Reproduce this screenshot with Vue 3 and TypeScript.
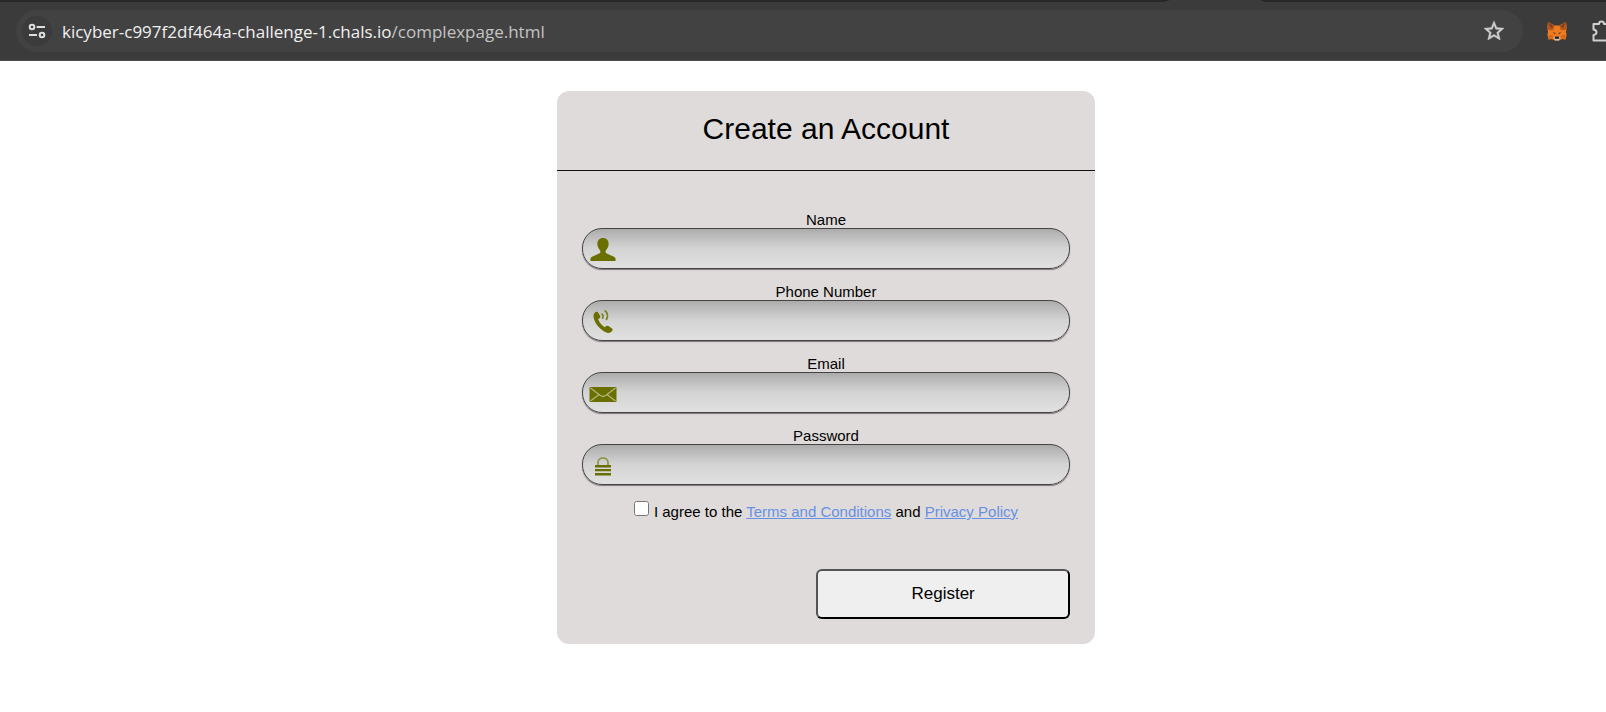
<script setup lang="ts">
import { reactive, ref } from 'vue'

type FieldKey = 'name' | 'phone' | 'email' | 'password'

interface Field {
  key: FieldKey
  label: string
  type: string
}

const fields: Field[] = [
  { key: 'name', label: 'Name', type: 'text' },
  { key: 'phone', label: 'Phone Number', type: 'tel' },
  { key: 'email', label: 'Email', type: 'email' },
  { key: 'password', label: 'Password', type: 'password' },
]

const values = reactive<Record<FieldKey, string>>({ name: '', phone: '', email: '', password: '' })
const agreed = ref(false)
</script>

<template>
  <div class="window">
    <header class="chrome">
      <div class="tabstrip"><div class="tab"></div></div>
      <div class="toolbar">
        <div class="omnibox">
          <button class="site-info" type="button" aria-label="View site information">
            <svg width="18" height="18" viewBox="0 0 18 18" fill="none" stroke="#dedede" stroke-width="2">
              <circle cx="4" cy="5" r="2.3" />
              <path d="M8.6 5H17M1 13h8" />
              <circle cx="14" cy="13" r="2.3" />
            </svg>
          </button>
          <div class="url"><span class="host">kicyber-c997f2df464a-challenge-1.chals.io</span>/complexpage.html</div>
          <button class="icon-button" type="button" aria-label="Bookmark this tab">
            <svg width="24" height="24" viewBox="0 0 24 24" fill="#cfcfcf" stroke="#cfcfcf" stroke-width=".5">
              <path d="M22 9.24l-7.19-.62L12 2 9.19 8.63 2 9.24l5.46 4.73L5.82 21 12 17.27 18.18 21l-1.63-7.03L22 9.24zM12 15.4l-3.76 2.27 1-4.28-3.32-2.88 4.38-.38L12 6.1l1.71 4.04 4.38.38-3.32 2.88 1 4.28L12 15.4z" />
            </svg>
          </button>
        </div>
        <div class="extensions">
          <button class="icon-button" type="button" aria-label="MetaMask">
            <svg width="20" height="20" viewBox="0 0 20 20">
              <path d="M1 1l6.500 3.500h5L19 1l.6 6-.6 4 .6 3-1.200 4.400-3.400-.4L12 19.500H8L5 18l-3.400.4L.4 14l.6-3-.6-4z" fill="#ee7c1d" />
              <path d="M1 1l6.500 3.500-1.200 4.700L1.600 9 .4 6zM19 1l-6.500 3.500 1.200 4.700L18.400 9l1.200-3z" fill="#b5561f" />
              <path d="M1 1l5.300 4.300L4 7zM19 1l-5.300 4.300L16 7z" fill="#823d1c" />
              <path d="M1.400 14h4.400l.4 3-4.600 1.400zM18.600 14h-4.400l-.4 3 4.600 1.400z" fill="#d9691a" />
              <path d="M5.500 11l3 1-.4 1.500zM14.500 11l-3 1 .4 1.500z" fill="#5b3a28" />
              <path d="M6.500 16.400l1.500-1h4l1.500 1-1.500 3H8z" fill="#cfbfb2" />
              <path d="M8.200 15.400h3.600l.5 1.800-.6.6H8.300l-.6-.6z" fill="#191919" />
            </svg>
          </button>
          <button class="icon-button" type="button" aria-label="Extensions">
            <svg width="24" height="24" viewBox="0 0 24 24" fill="none" stroke="#cfcfcf" stroke-width="2" stroke-linejoin="round">
              <path d="M2.500 5H8c0-3.300 5-3.300 5 0h6v6c4 0 4 5 0 5v5.500H2.500V16c4-.7 4-4.800 0-5.500z" />
            </svg>
          </button>
        </div>
      </div>
    </header>

    <main>
      <form class="card" @submit.prevent>
        <h1>Create an Account</h1>
        <div class="body">
          <div v-for="field in fields" :key="field.key" class="field">
            <label :for="field.key">{{ field.label }}</label>
            <div class="control">
              <input :id="field.key" v-model="values[field.key]" :type="field.type" />
              <svg class="glyph" width="30" height="26" viewBox="0 0 30 26" fill="#697000" aria-hidden="true">
                <path v-if="field.key === 'name'" d="M15 1c-3.500 0-5.800 2.500-5.600 6.300.1 2.700 1.300 4.900 2.900 6.100v2.400c-1.500 1.500-7.300 3-9.300 4.600-.7.7-.7 2.200-.5 3.600h25c.2-1.400.2-2.900-.5-3.600-2-1.600-7.800-3.100-9.300-4.600v-2.400c1.600-1.200 2.800-3.400 2.900-6.100C20.800 3.500 18.500 1 15 1z" />
                <g v-else-if="field.key === 'phone'">
                  <path d="M6.500 4c1-1.200 2.600-1.600 3.400-.7l2.300 3.600c.5.900.1 1.700-.7 2.300l-1.400.9c.9 2.900 3.500 6.200 6.600 8.200l1.600-1.200c.7-.5 1.500-.5 2.200 0l3.500 2.300c.8.600.8 1.500.2 2.300-1.600 2.300-3.900 2.800-6.300 1.600C12.200 20.700 7.400 15.300 5.900 9.800c-.6-2.300-.6-4.400.6-5.800z" />
                  <path d="M13.500 4.600c1.600 1.200 1.900 3.300.8 5.100M16.600 1.600c3.200 1.900 3.800 6.200 1.500 9.400" fill="none" stroke="#7b8120" stroke-width="1.700" />
                </g>
                <g v-else-if="field.key === 'email'">
                  <rect x="1.500" y="6" width="27" height="15" rx="1" />
                  <path d="M2.500 7l9.500 7.200 3 1.300 3-1.300L27.500 7M2.500 20l8.500-6.500M27.500 20L19 13.500" fill="none" stroke="#b4b77b" stroke-width="1.200" />
                </g>
                <g v-else>
                  <path d="M10 13V9.500C10 3.500 20 3.500 20 9.500V13" fill="none" stroke="#8b913a" stroke-width="1.600" />
                  <path d="M7 12h16v2.600H7zM7 16h16v2.200H7zM7 20h16v2.600H7z" />
                </g>
              </svg>
            </div>
          </div>

          <div class="agree">
            <input id="agree" v-model="agreed" type="checkbox" />
            <label for="agree">I agree to the <a href="#terms">Terms and Conditions</a> and <a href="#privacy">Privacy Policy</a></label>
          </div>

          <button class="register" type="submit">Register</button>
        </div>
      </form>
    </main>
  </div>
</template>

<style>
body {
  background: #fff;
}
</style>

<style scoped>
.window {
  font-family: "Liberation Sans", Arial, sans-serif;
  font-size: 15px;
  line-height: 17px;
  color: #000;
}

.chrome {
  background: #3b3b3b;
  border-bottom: 1px solid #4c4c4c;
}

.tabstrip {
  display: flex;
  justify-content: flex-end;
  height: 2px;
  padding-right: 340px;
  background: #282828;
}

.tab {
  width: 102px;
  background: #3b3b3b;
  clip-path: polygon(6px 0, 96px 0, 100% 100%, 0 100%);
}

.toolbar {
  display: flex;
  padding: 8px 0 8px 16px;
}

.omnibox {
  display: flex;
  flex: 1;
  align-items: center;
  min-width: 0;
  height: 42px;
  padding: 0 17px 0 6px;
  box-sizing: border-box;
  border-radius: 21px;
  background: #424242;
}

.site-info,
.icon-button {
  display: flex;
  flex: none;
  align-items: center;
  justify-content: center;
  padding: 0;
  border: 0;
  background: none;
}

.site-info {
  width: 30px;
  height: 30px;
  border-radius: 50%;
  background: #3b3b3b;
}

.url {
  flex: 1;
  min-width: 0;
  padding: 2px 0 0 10px;
  overflow: hidden;
  font-family: "Segoe UI", "Open Sans", "Noto Sans", sans-serif;
  font-size: 17px;
  line-height: 26px;
  white-space: nowrap;
  color: #c4c4c4;
}

.host {
  color: #f0f0f0;
}

.extensions {
  display: flex;
  flex: none;
  align-items: center;
  gap: 24px;
  width: 59px;
  padding-left: 24px;
  overflow: hidden;
}

main {
  padding: 30px 0 30px 46px;
}

.card {
  max-width: 538px;
  margin: 0 auto;
  border-radius: 12px;
  background: #dfdbda;
}

h1 {
  margin: 0;
  padding: 20px 0 24px;
  border-bottom: 1px solid #111;
  font-size: 30px;
  font-weight: 400;
  line-height: 35px;
  text-align: center;
}

.body {
  display: flex;
  flex-direction: column;
  padding: 40px 25px 25px;
}

.field {
  display: flex;
  flex-direction: column;
  margin-bottom: 14px;
  text-align: center;
}

.control {
  position: relative;
  display: flex;
}

.control input {
  flex: 1;
  min-width: 0;
  height: 41px;
  padding: 0 16px 0 42px;
  box-sizing: border-box;
  border: 1px solid #444;
  border-radius: 20px;
  background: linear-gradient(#acacac, #d3d3d3 48%, #e1e1e1);
  box-shadow: 0 1px 1px #777;
  font: inherit;
}

.glyph {
  position: absolute;
  top: 9px;
  left: 6px;
  pointer-events: none;
}

.agree {
  display: flex;
  justify-content: center;
  gap: 5px;
  padding-top: 2px;
  margin-bottom: 49px;
}

.agree input {
  width: 15px;
  height: 15px;
  margin: 0;
}

.agree label {
  padding-top: 2px;
}

.agree a {
  color: #6690e4;
}

.register {
  align-self: flex-end;
  width: 52%;
  height: 50px;
  border: 2px outset #000;
  border-radius: 6px;
  background: #efefef;
  font: 17px/20px "Liberation Sans", Arial, sans-serif;
  color: #000;
}
</style>
